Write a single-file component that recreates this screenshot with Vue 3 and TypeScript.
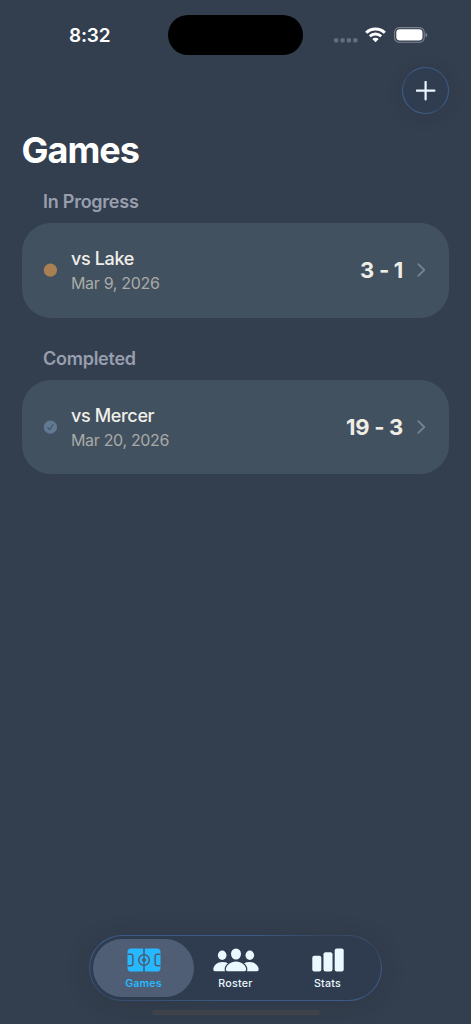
<script setup lang="ts">
interface Game {
  opponent: string
  date: string
  score: string
  done: boolean
}
interface Section {
  title: string
  games: Game[]
}

const sections: Section[] = [
  { title: 'In Progress', games: [{ opponent: 'vs Lake', date: 'Mar 9, 2026', score: '3 - 1', done: false }] },
  { title: 'Completed', games: [{ opponent: 'vs Mercer', date: 'Mar 20, 2026', score: '19 - 3', done: true }] },
]
</script>

<template>
  <div class="screen">
    <header class="status">
      <span class="time">8:32</span>
      <div class="island"></div>
      <div class="indicators">
        <svg class="cell" width="24" height="5" viewBox="0 0 24 5">
          <rect v-for="i in 4" :key="i" :x="(i - 1) * 6.4" y="0.3" width="4.3" height="4.1" rx="1.3" fill="#656e7b" />
        </svg>
        <svg class="wifi" width="21" height="16" viewBox="0 0 21 16">
          <g fill="none" stroke="#fff" stroke-width="3">
            <path d="M1.2 5.7a13.3 13.3 0 0 1 18.6 0" />
            <path d="M4.8 9.3a8.2 8.2 0 0 1 11.4 0" stroke-width="2.8" />
          </g>
          <path d="M7.3 12.1a4.6 4.6 0 0 1 6.4 0L10.5 15.3z" fill="#fff" />
        </svg>
        <svg class="battery" width="34" height="16" viewBox="0 0 34 16">
          <rect x="0.6" y="0.6" width="29.6" height="14.6" rx="4.7" fill="none" stroke="#7c8490" stroke-width="1.1" />
          <rect x="2.3" y="2.3" width="26.2" height="11.2" rx="3.4" fill="#fff" />
          <path d="M31.5 5.4c2.3.7 2.3 4.3 0 5z" fill="#7c8490" />
        </svg>
      </div>
    </header>

    <div class="toolbar">
      <button class="add" aria-label="Add game">
        <svg width="20" height="20" viewBox="0 0 20 20">
          <path d="M9.6 0.9v17.6M0.8 9.7h17.6" stroke="#eaf6ff" stroke-width="2.2" stroke-linecap="round" />
        </svg>
      </button>
    </div>

    <h1>Games</h1>

    <section v-for="s in sections" :key="s.title">
      <h2>{{ s.title }}</h2>
      <div v-for="g in s.games" :key="g.opponent" class="card">
        <svg class="mark" width="14" height="14" viewBox="0 0 14 14">
          <circle cx="7.4" cy="7.2" r="6.6" :fill="g.done ? '#627994' : '#a98052'" />
          <path v-if="g.done" d="M4.8 7.6l1.9 2.1 3.3-5" fill="none" stroke="#425160" stroke-width="1.1" stroke-linecap="round" stroke-linejoin="round" />
        </svg>
        <div class="info">
          <div class="name">{{ g.opponent }}</div>
          <div class="date">{{ g.date }}</div>
        </div>
        <div class="score">{{ g.score }}</div>
        <svg class="chevron" width="9" height="14" viewBox="0 0 9 14">
          <path d="M1.3 1.2L7.3 7l-6 5.8" fill="none" stroke="#768290" stroke-width="1.8" stroke-linecap="round" stroke-linejoin="round" />
        </svg>
      </div>
    </section>

    <div class="home"></div>
    <nav class="tabs">
      <div class="tab active">
        <svg width="34" height="24" viewBox="0 0 34 24">
          <rect x="0.5" y="0.5" width="33" height="23" rx="3.6" fill="#27b9ff" />
          <g fill="none" stroke="#4b5b73" stroke-width="1.5">
            <path d="M17 0v7M17 17v7M0.5 6.3h3.2q2.2 0 2.2 2.2v7q0 2.2-2.2 2.2H0.5M33.5 6.3h-3.2q-2.2 0-2.2 2.2v7q0 2.2 2.2 2.2h3.2" />
            <path d="M17 7v10" stroke-width="1.2" />
            <circle cx="17" cy="12" r="5.3" />
          </g>
          <circle cx="17" cy="12" r="2" fill="#4b5b73" />
        </svg>
        <span>Games</span>
      </div>
      <div class="tab">
        <svg width="46" height="24" viewBox="0 0 46 24">
          <g fill="#eaf8ff">
            <ellipse cx="9.2" cy="7.3" rx="4.3" ry="4.7" />
            <ellipse cx="36.8" cy="7.3" rx="4.3" ry="4.7" />
            <path d="M2 23.3Q.3 23.3.3 21.5C.3 17.5 4.4 14 9.2 14q3.4 0 5.8 1.3c-2.7 2-4 5-3 8zM44 23.3q1.7 0 1.7-1.8c0-4-4.1-7.5-8.9-7.5q-3.4 0-5.8 1.3c2.7 2 4 5 3 8z" />
            <ellipse cx="23" cy="6" rx="5" ry="5.5" />
          </g>
          <path d="M14.9 23.3q-2 0-2-1.9c0-3.8 4.6-7.8 10.1-7.8s10.1 4 10.1 7.8q0 1.9-2 1.9z" fill="#eaf8ff" stroke="#2f3c4f" stroke-width="1.6" paint-order="stroke" />
        </svg>
        <span>Roster</span>
      </div>
      <div class="tab">
        <svg width="32" height="24" viewBox="0 0 32 24">
          <g fill="#eaf8ff">
            <rect x="0.3" y="7.8" width="9" height="15.7" rx="2" />
            <rect x="11.5" y="4.2" width="9" height="19.3" rx="2" />
            <rect x="22.7" y="0.5" width="9" height="23" rx="2" />
          </g>
        </svg>
        <span>Stats</span>
      </div>
    </nav>
  </div>
</template>

<style>
body {
  background: #333e4e;
}
</style>

<style scoped>
* {
  box-sizing: border-box;
}
.screen {
  position: relative;
  width: 471px;
  height: 1024px;
  overflow: hidden;
  background: #333e4e;
  color: #fff;
  font-family: Inter, "Liberation Sans", sans-serif;
}
.status {
  display: flex;
  height: 67px;
  padding-top: 15px;
}
.time {
  width: 168px;
  padding-left: 69px;
  font-size: 19px;
  font-weight: 600;
  line-height: 42px;
  letter-spacing: -0.2px;
}
.island {
  width: 135px;
  height: 40px;
  border-radius: 20px;
  background: #000;
}
.indicators {
  display: flex;
  height: 40px;
  padding-left: 31px;
  align-items: center;
}
.cell {
  margin-top: 10px;
}
.wifi {
  margin-left: 7px;
}
.battery {
  margin-left: 8px;
}
.toolbar {
  display: flex;
  justify-content: flex-end;
  padding-right: 22px;
  height: 62px;
}
.add {
  display: grid;
  place-items: center;
  width: 47px;
  height: 47px;
  padding: 0;
  border: 1px solid transparent;
  border-radius: 50%;
  background: linear-gradient(#303c4f, #303c4f) padding-box,
    linear-gradient(45deg, #365077, #41628f 20%, #354b6d 45%, #415f8c 60%, #3a5479) border-box;
  box-shadow: 0 3px 18px rgba(30, 38, 48, 0.12);
}
h1 {
  margin: 0 0 0 21.5px;
  font-size: 36px;
  font-weight: 700;
  line-height: 43px;
  letter-spacing: -1px;
}
section {
  margin: 0 22px 11.2px;
}
h2 {
  margin: 0;
  padding: 19.4px 0 0 21px;
  height: 51.2px;
  font-size: 18px;
  font-weight: 600;
  line-height: 22px;
  letter-spacing: -0.25px;
  color: #989eae;
}
.card {
  display: flex;
  align-items: center;
  height: 94.4px;
  padding: 0 23px 0 21px;
  border-radius: 29px;
  background: #425160;
}
.info {
  flex: 1;
  margin-left: 14px;
}
.name {
  padding-top: 1px;
  font-size: 18px;
  font-weight: 550;
  line-height: 26px;
  letter-spacing: -0.35px;
  color: #f0efea;
}
.date {
  margin-top: -1px;
  font-size: 16px;
  line-height: 24px;
  letter-spacing: -0.33px;
  color: #a9aaa7;
}
.score {
  margin-bottom: 1px;
  font-size: 22px;
  font-weight: 650;
  line-height: 28px;
  letter-spacing: -0.3px;
  color: #f0ede5;
}
.chevron {
  margin-left: 14px;
}
.tabs {
  position: absolute;
  left: 89px;
  top: 935px;
  display: flex;
  width: 293px;
  height: 66px;
  padding: 3px;
  border: 1px solid transparent;
  border-radius: 33px;
  background: linear-gradient(#2f3c4f, #2f3c4f) padding-box,
    linear-gradient(15deg, #354866, #3d5b89 30%, #3d5b89 75%, #35445a 90%, #3d5b89) border-box;
  box-shadow: 0 3px 24px rgba(35, 40, 45, 0.18);
}
.tab {
  display: flex;
  flex-direction: column;
  align-items: center;
  width: 101px;
  height: 58px;
  margin-right: -9px;
  padding-top: 9.4px;
  border-radius: 29px;
  color: #eaf8ff;
  font-size: 10.7px;
  font-weight: 500;
  line-height: 14px;
  letter-spacing: 0.25px;
}
.tab span {
  margin-top: 4.6px;
}
.active {
  background: #505e75;
  color: #27b9ff;
  font-weight: 600;
  letter-spacing: 0.15px;
}
.home {
  position: absolute;
  left: 152px;
  top: 1010px;
  width: 168px;
  height: 5px;
  border-radius: 3px;
  background: #41454b;
}
</style>
